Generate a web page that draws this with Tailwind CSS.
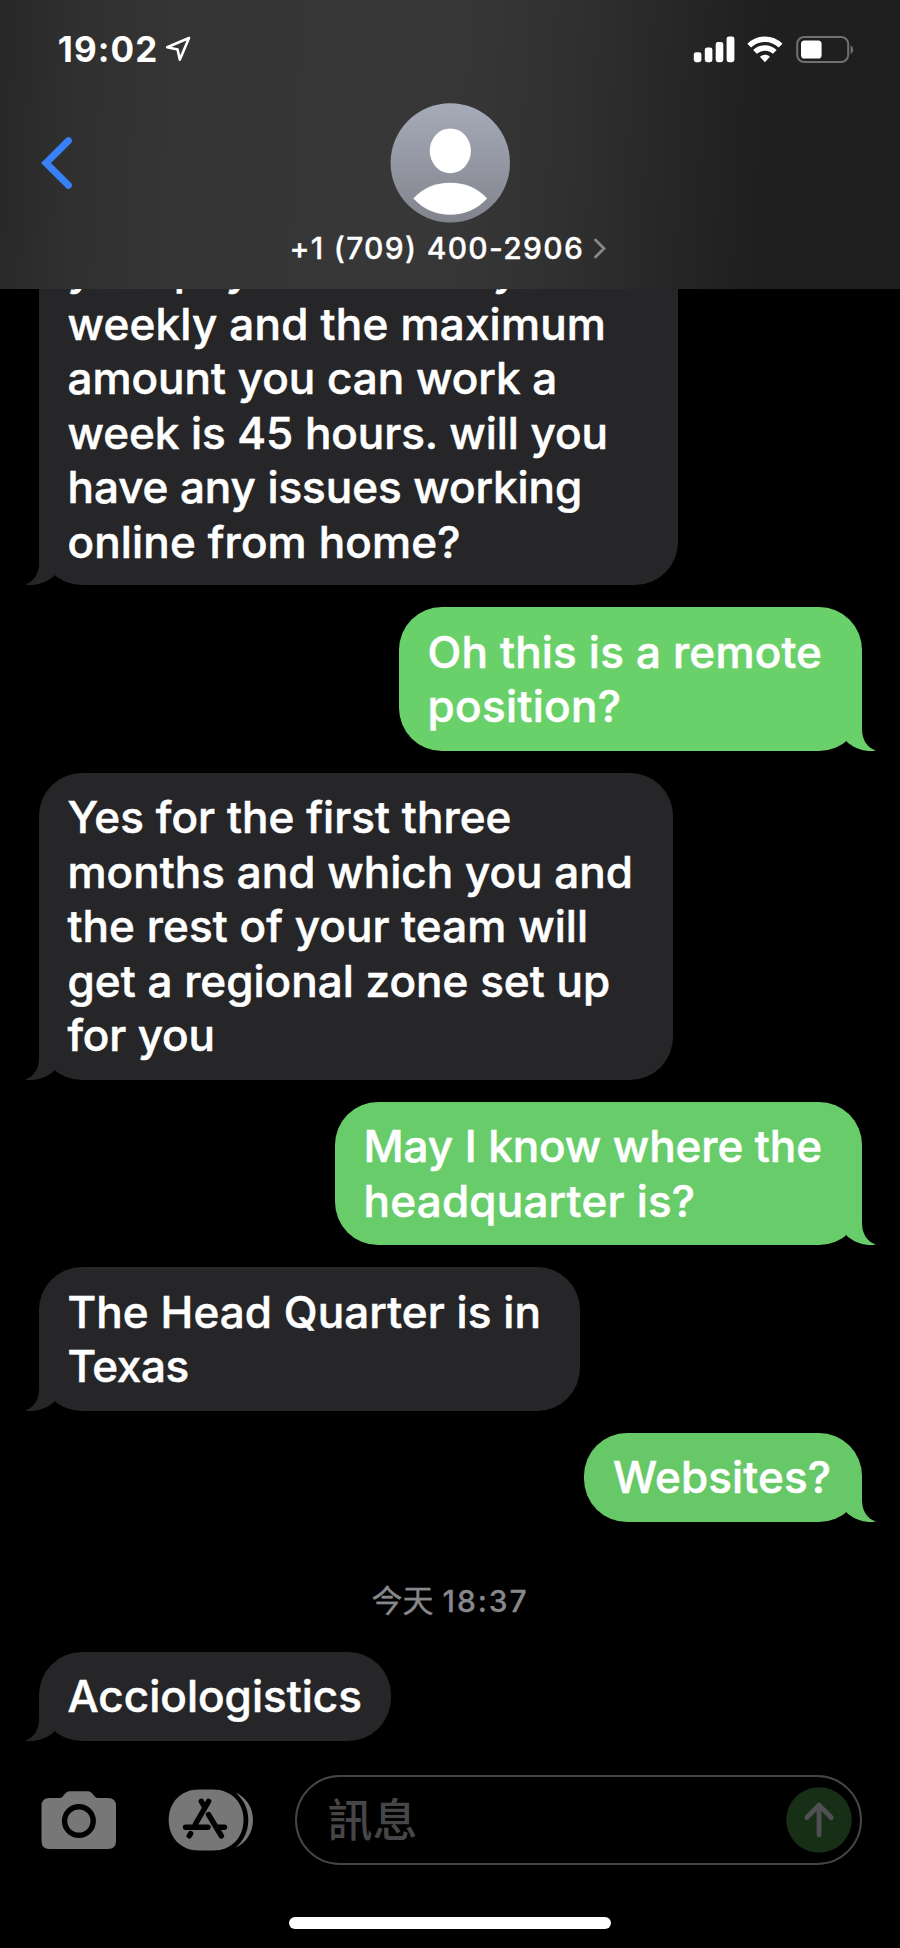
<!DOCTYPE html>
<html lang="zh-Hant">
<head>
<meta charset="utf-8">
<title>+1 (709) 400-2906</title>
<script src="https://cdn.jsdelivr.net/npm/@tailwindcss/browser@4"></script>
</head>
<body class="bg-black">
<div class="flex h-[1948px] w-[900px] flex-col overflow-hidden bg-black font-['Inter','Noto_Sans_CJK_TC',sans-serif] text-white">

  <header class="relative z-10 h-[288.5px] shrink-0 bg-[linear-gradient(93deg,#292929_2%,#303030_9%,#353535_20%,#373738_45%,#363637_52%,#303030_63%,#262626_75%,#1f1f1f_84%,#1e1e1e_100%)]">
    <div class="flex h-[98px] items-center justify-between pl-[57.7px] pr-[45.5px]">
      <div class="flex items-center">
        <span class="text-[35px] leading-10 font-bold tracking-[1.1px]">19:02</span>
        <svg class="ml-[7px]" width="26" height="26" viewBox="0 0 26 26" fill="none" stroke="#fff" stroke-width="2.6" stroke-linejoin="round"><path d="M24 2 2.2 11.2 12.6 13.4 14.8 23.8Z"/></svg>
      </div>
      <div class="flex items-center">
        <svg width="42" height="27" viewBox="0 0 42 27" fill="#fff"><rect x="0.8" y="16.2" width="7.6" height="10" rx="2.4"/><rect x="11.8" y="11.4" width="7.6" height="14.8" rx="2.4"/><rect x="22.7" y="6" width="7.6" height="20.2" rx="2.4"/><rect x="33.6" y="0.4" width="7.8" height="25.8" rx="2.4"/></svg>
        <svg class="ml-[12.5px]" width="36" height="27" viewBox="0 0 36 27" fill="none" stroke="#fff" stroke-width="5.4"><path d="M2.2 9.7C11 1 24.8 1 33.6 9.7"/><path d="M8 15.9C13.6 10.6 22.2 10.6 27.8 15.9"/><path d="M17.9 26.2 12.9 20.8C15.6 18.2 20.2 18.2 22.9 20.8Z" fill="#fff" stroke="none"/></svg>
        <svg class="ml-[12.5px]" width="59" height="27" viewBox="0 0 59 27"><rect x="1.2" y="1" width="51" height="25" rx="7" fill="none" stroke="#707070" stroke-width="2"/><rect x="5" y="4.5" width="20.6" height="18" rx="3.6" fill="#fff"/><path d="M54.6 9.2C58 10.6 58 16.6 54.6 18Z" fill="#707070"/></svg>
      </div>
    </div>
    <div class="grid grid-cols-[300px_300px_300px] pt-[5px]">
      <svg class="mt-[34px] ml-[38px]" width="40" height="54" viewBox="0 0 40 54" fill="none" stroke="#3880f7" stroke-width="7" stroke-linecap="round"><path d="M30.4 3.8 8 26 30.4 48.2"/></svg>
      <div class="flex flex-col items-center">
        <svg width="120" height="120" viewBox="0 0 120 120"><defs><linearGradient id="av" x1="0" y1="0" x2="0" y2="1"><stop offset="0" stop-color="#a6abb9"/><stop offset="1" stop-color="#82848d"/></linearGradient></defs><circle cx="60.3" cy="59.9" r="59.7" fill="url(#av)"/><ellipse cx="60.3" cy="47.8" rx="20.6" ry="22.4" fill="#fff"/><path d="M23.4 95.5C33 84.5 46 79.7 60.2 79.7S87.5 84.5 97.2 95.5C87 106.5 74 111.7 60.2 111.7S33.5 106.5 23.4 95.5Z" fill="#fff"/></svg>
        <div class="mt-[7px] mr-[3px] flex items-center whitespace-nowrap">
          <span class="text-[30px] leading-9 font-medium tracking-[1.3px] [-webkit-text-stroke:0.3px_white]">+1 (709) 400-2906</span>
          <svg class="ml-[7.5px]" width="16" height="22" viewBox="0 0 16 22" fill="none" stroke="#85878b" stroke-width="2.8" stroke-linecap="round"><path d="M3.5 3 12 11.5 3.5 20"/></svg>
        </div>
      </div>
    </div>
  </header>

  <main class="flex flex-col gap-[22.1px] px-[38.5px] text-[44px] leading-[54.5px] font-medium whitespace-nowrap [-webkit-text-stroke:0.55px_white]">

    <div class="relative -mt-[46.5px] w-[639px] rounded-[43px] bg-[#262628] px-[29px] pb-[16px]">
      <div class="flex"><span>your pay</span><span class="ml-[242px]">y</span></div>
      <div class="tracking-[0.2px]">weekly and the maximum</div>
      <div class="tracking-[-0.01px]">amount you can work a</div>
      <div class="tracking-[-0.06px]">week is 45 hours. will you</div>
      <div class="tracking-[-0.07px]">have any issues working</div>
      <div class="tracking-[0.14px]">online from home?</div>
      <svg class="absolute bottom-0 -left-[14px]" width="36" height="46" viewBox="0 -12 36 46" fill="#262628"><path d="M14 -12V12C14 23 8.5 31 0 33.6C11 35.5 22 31.5 29.5 24.6L28 6 16 -12Z"/></svg>
    </div>

    <div class="relative w-[463px] self-end rounded-[43px] bg-[#6ad16a] px-[29px] pt-[17.5px] pb-[17px]">
      <div class="tracking-[0.18px]">Oh this is a remote</div>
      <div class="tracking-[0.33px]">position?</div>
      <svg class="absolute -right-[14px] bottom-0 -scale-x-100" width="36" height="46" viewBox="0 -12 36 46" fill="#6ad16a"><path d="M14 -12V12C14 23 8.5 31 0 33.6C11 35.5 22 31.5 29.5 24.6L28 6 16 -12Z"/></svg>
    </div>

    <div class="relative w-[634px] rounded-[43px] bg-[#262628] px-[29px] pt-[17.5px] pb-[17px]">
      <div class="tracking-[0.06px]">Yes for the first three</div>
      <div class="tracking-[0.02px]">months and which you and</div>
      <div class="tracking-[0.06px]">the rest of your team will</div>
      <div class="tracking-[0.02px]">get a regional zone set up</div>
      <div class="tracking-[-0.16px]">for you</div>
      <svg class="absolute bottom-0 -left-[14px]" width="36" height="46" viewBox="0 -12 36 46" fill="#262628"><path d="M14 -12V12C14 23 8.5 31 0 33.6C11 35.5 22 31.5 29.5 24.6L28 6 16 -12Z"/></svg>
    </div>

    <div class="relative w-[527px] self-end rounded-[43px] bg-[#69cc6a] px-[29px] pt-[17.5px] pb-[17px]">
      <div class="tracking-[-0.09px]">May I know where the</div>
      <div class="tracking-[0.22px]">headquarter is?</div>
      <svg class="absolute -right-[14px] bottom-0 -scale-x-100" width="36" height="46" viewBox="0 -12 36 46" fill="#69cc6a"><path d="M14 -12V12C14 23 8.5 31 0 33.6C11 35.5 22 31.5 29.5 24.6L28 6 16 -12Z"/></svg>
    </div>

    <div class="relative w-[541.5px] rounded-[43px] bg-[#262628] px-[29px] pt-[17.5px] pb-[17px]">
      <div class="tracking-[0.07px]">The Head Quarter is in</div>
      <div class="tracking-[-0.42px]">Texas</div>
      <svg class="absolute bottom-0 -left-[14px]" width="36" height="46" viewBox="0 -12 36 46" fill="#262628"><path d="M14 -12V12C14 23 8.5 31 0 33.6C11 35.5 22 31.5 29.5 24.6L28 6 16 -12Z"/></svg>
    </div>

    <div class="relative w-[277.5px] self-end rounded-[43px] bg-[#67c868] px-[29px] pt-[17.5px] pb-[17px]">
      <div class="tracking-[0.11px]">Websites?</div>
      <svg class="absolute -right-[14px] bottom-0 -scale-x-100" width="36" height="46" viewBox="0 -12 36 46" fill="#67c868"><path d="M14 -12V12C14 23 8.5 31 0 33.6C11 35.5 22 31.5 29.5 24.6L28 6 16 -12Z"/></svg>
    </div>

    <div class="flex h-[85.5px] items-center justify-center pt-[27.5px] text-[30px] leading-10 font-medium text-[#88888c] [-webkit-text-stroke:0.3px_#88888c]"><span class="text-[31px] font-normal">今天</span><span class="ml-[9px] tracking-[1.9px]">18:37</span></div>

    <div class="relative w-[352.5px] rounded-[43px] bg-[#262628] px-[29px] pt-[17.5px] pb-[17px]">
      <div class="tracking-[0.02px]">Acciologistics</div>
      <svg class="absolute bottom-0 -left-[14px]" width="36" height="46" viewBox="0 -12 36 46" fill="#262628"><path d="M14 -12V12C14 23 8.5 31 0 33.6C11 35.5 22 31.5 29.5 24.6L28 6 16 -12Z"/></svg>
    </div>
  </main>

  <footer class="mt-auto flex h-[173px] shrink-0 flex-col items-center justify-between pb-[19px]">
    <div class="flex h-[90px] w-full items-center pr-[38.5px] pl-[41px]">
      <svg width="76" height="60" viewBox="0 0 76 60"><path d="M8.5 8H18.5C23 8 23.5 1.3 29 1.3H46.5C52 1.3 52.5 8 57 8H67Q75 8 75 16V51Q75 59 67 59H8.5Q.5 59 .5 51V16Q.5 8 8.5 8Z" fill="#777"/><circle cx="37.9" cy="31" r="14.3" fill="none" stroke="#000" stroke-width="5.4"/></svg>
      <svg class="ml-[49px]" width="90" height="64" viewBox="166 1788 90 64"><path d="M199 1789.5H213C232 1789.5 243.5 1803 243.5 1820S232 1850.5 213 1850.5H199C180 1850.5 168.7 1837 168.7 1820S180 1789.5 199 1789.5Z" fill="#777"/><path d="M235.5 1792.5C246 1797 253 1807.5 253 1820S246 1843 235.5 1847.8C243.5 1841 248.3 1831.5 248.3 1820S243.5 1799.5 235.5 1792.5Z" fill="#777"/><g stroke="#000" stroke-width="5.4" stroke-linecap="round" fill="none"><path d="M201.3 1801.3 205 1807.5M208.6 1801.3 195.500 1824M208.500 1814.500 221.400 1836M185.500 1827.200H208M217 1827.200H224.500M190.600 1833.600 189.300 1835.800"/></g></svg>
      <div class="ml-[39px] flex h-[90px] flex-1 items-center justify-between rounded-full border-2 border-[#454547] pr-[7.5px] pl-[30.5px]">
        <span class="text-[45px] leading-none font-medium text-[#464648]">訊息</span>
        <svg width="66" height="66" viewBox="0 0 66 66"><circle cx="33" cy="33" r="32.800" fill="#172e17"/><path d="M33 48V18M20.800 30.500 33 18.300 45.200 30.500" fill="none" stroke="#505052" stroke-width="4.800" stroke-linecap="round" stroke-linejoin="round"/></svg>
      </div>
    </div>
    <div class="h-[12.500px] w-[322px] rounded-full bg-white"></div>
  </footer>
</div>
</body>
</html>
